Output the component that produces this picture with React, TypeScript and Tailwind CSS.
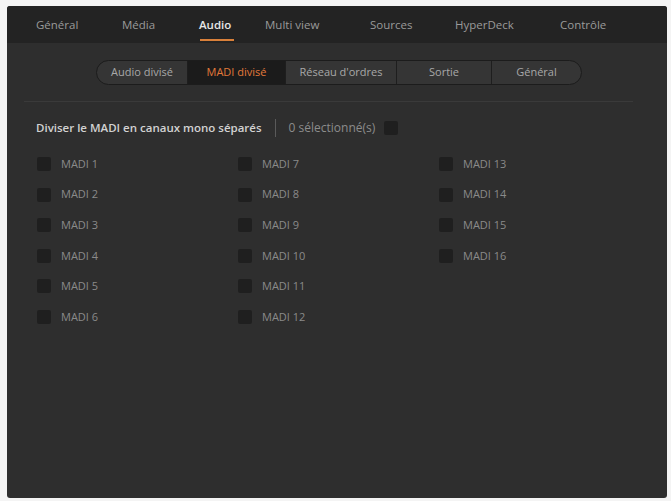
import React from 'react';

// cell widths follow the spacing of the reference tab strip
const mainTabs = [
  { label: 'Général', w: 'w-[86px]' },
  { label: 'Média', w: 'w-[77px]' },
  { label: 'Audio', w: 'w-[66px]' },
  { label: 'Multi view', w: 'w-[105px]' },
  { label: 'Sources', w: 'w-[85px]' },
  { label: 'HyperDeck', w: 'w-[105px]' },
  { label: 'Contrôle', w: 'w-[60px]' },
];

const subTabs = [
  { label: 'Audio divisé', w: 'w-[90px]' },
  { label: 'MADI divisé', w: 'w-[98px]' },
  { label: "Réseau d'ordres", w: 'w-[111px]' },
  { label: 'Sortie', w: 'w-[95px]' },
  { label: 'Général', w: 'w-[90px]' },
];

const columns = [
  [1, 2, 3, 4, 5, 6],
  [7, 8, 9, 10, 11, 12],
  [13, 14, 15, 16],
];

const Box = () => <span className="block w-[14px] h-[14px] rounded-[2px] bg-[#1f1f1f] shrink-0" />;

export default function App() {
  return (
    <div className="w-[671px] h-[501px] bg-[#f4f4f4] pt-[6px] pl-[7px] pr-[4px] pb-[3px] font-['Open_Sans',sans-serif]">
      <div className="h-full flex flex-col bg-[#2e2e2e] rounded-[3px] overflow-hidden">
        {/* top tabs */}
        <div className="h-[37px] bg-[#232323] flex items-stretch pl-[29px] shrink-0">
          {mainTabs.map((t) => (
            <div key={t.label} className={t.w + ' flex items-center'}>
              <div className="relative h-full flex items-center">
                <span
                  className={
                    t.label === 'Audio'
                      ? 'text-[11.5px] font-semibold text-[#e6e6e6]'
                      : 'text-[11.5px] text-[#9a9a9a]'
                  }
                >
                  {t.label}
                </span>
                {t.label === 'Audio' && (
                  <span className="absolute left-[1px] right-[-3px] bottom-[2px] h-[2px] bg-[#d9803a]" />
                )}
              </div>
            </div>
          ))}
        </div>

        {/* sub tabs */}
        <div className="pt-[17px] flex justify-center pl-[4px]">
          <div className="flex h-[25px] rounded-full border border-[#1c1c1c] bg-[#353535] overflow-hidden">
            {subTabs.map((s, i) => (
              <div
                key={s.label}
                className={
                  s.w +
                  ' flex items-center justify-center text-[11px] ' +
                  (i > 0 ? 'border-l border-[#1e1e1e] ' : '') +
                  (s.label === 'MADI divisé' ? 'bg-[#1b1b1b] text-[#e2793a]' : 'text-[#a8a8a8]')
                }
              >
                {s.label}
              </div>
            ))}
          </div>
        </div>

        <div className="ml-[17px] mr-[34px] mt-[16px] h-px bg-[#3a3a3a]" />

        {/* header row */}
        <div className="flex items-center mt-[17px] pl-[29px]">
          <span className="text-[11.5px] font-semibold text-[#d2d2d2]">Diviser le MADI en canaux mono séparés</span>
          <span className="mx-[13px] w-px h-[18px] bg-[#5a5a5a]" />
          <span className="text-[12px] text-[#8c8c8c]">0 sélectionné(s)</span>
          <span className="ml-[9px] block w-[14px] h-[14px] rounded-[2px] bg-[#1f1f1f]" />
        </div>

        {/* MADI grid */}
        <div className="flex mt-[20px] pl-[30px]">
          {columns.map((col, ci) => (
            <div key={ci} className="flex flex-col gap-[16.6px] w-[201px]">
              {col.map((n) => (
                <div key={n} className="flex items-center h-[14px] gap-[10px]">
                  <Box />
                  <span className="text-[11px] text-[#8a8a8a]">MADI {n}</span>
                </div>
              ))}
            </div>
          ))}
        </div>
      </div>
    </div>
  );
}
